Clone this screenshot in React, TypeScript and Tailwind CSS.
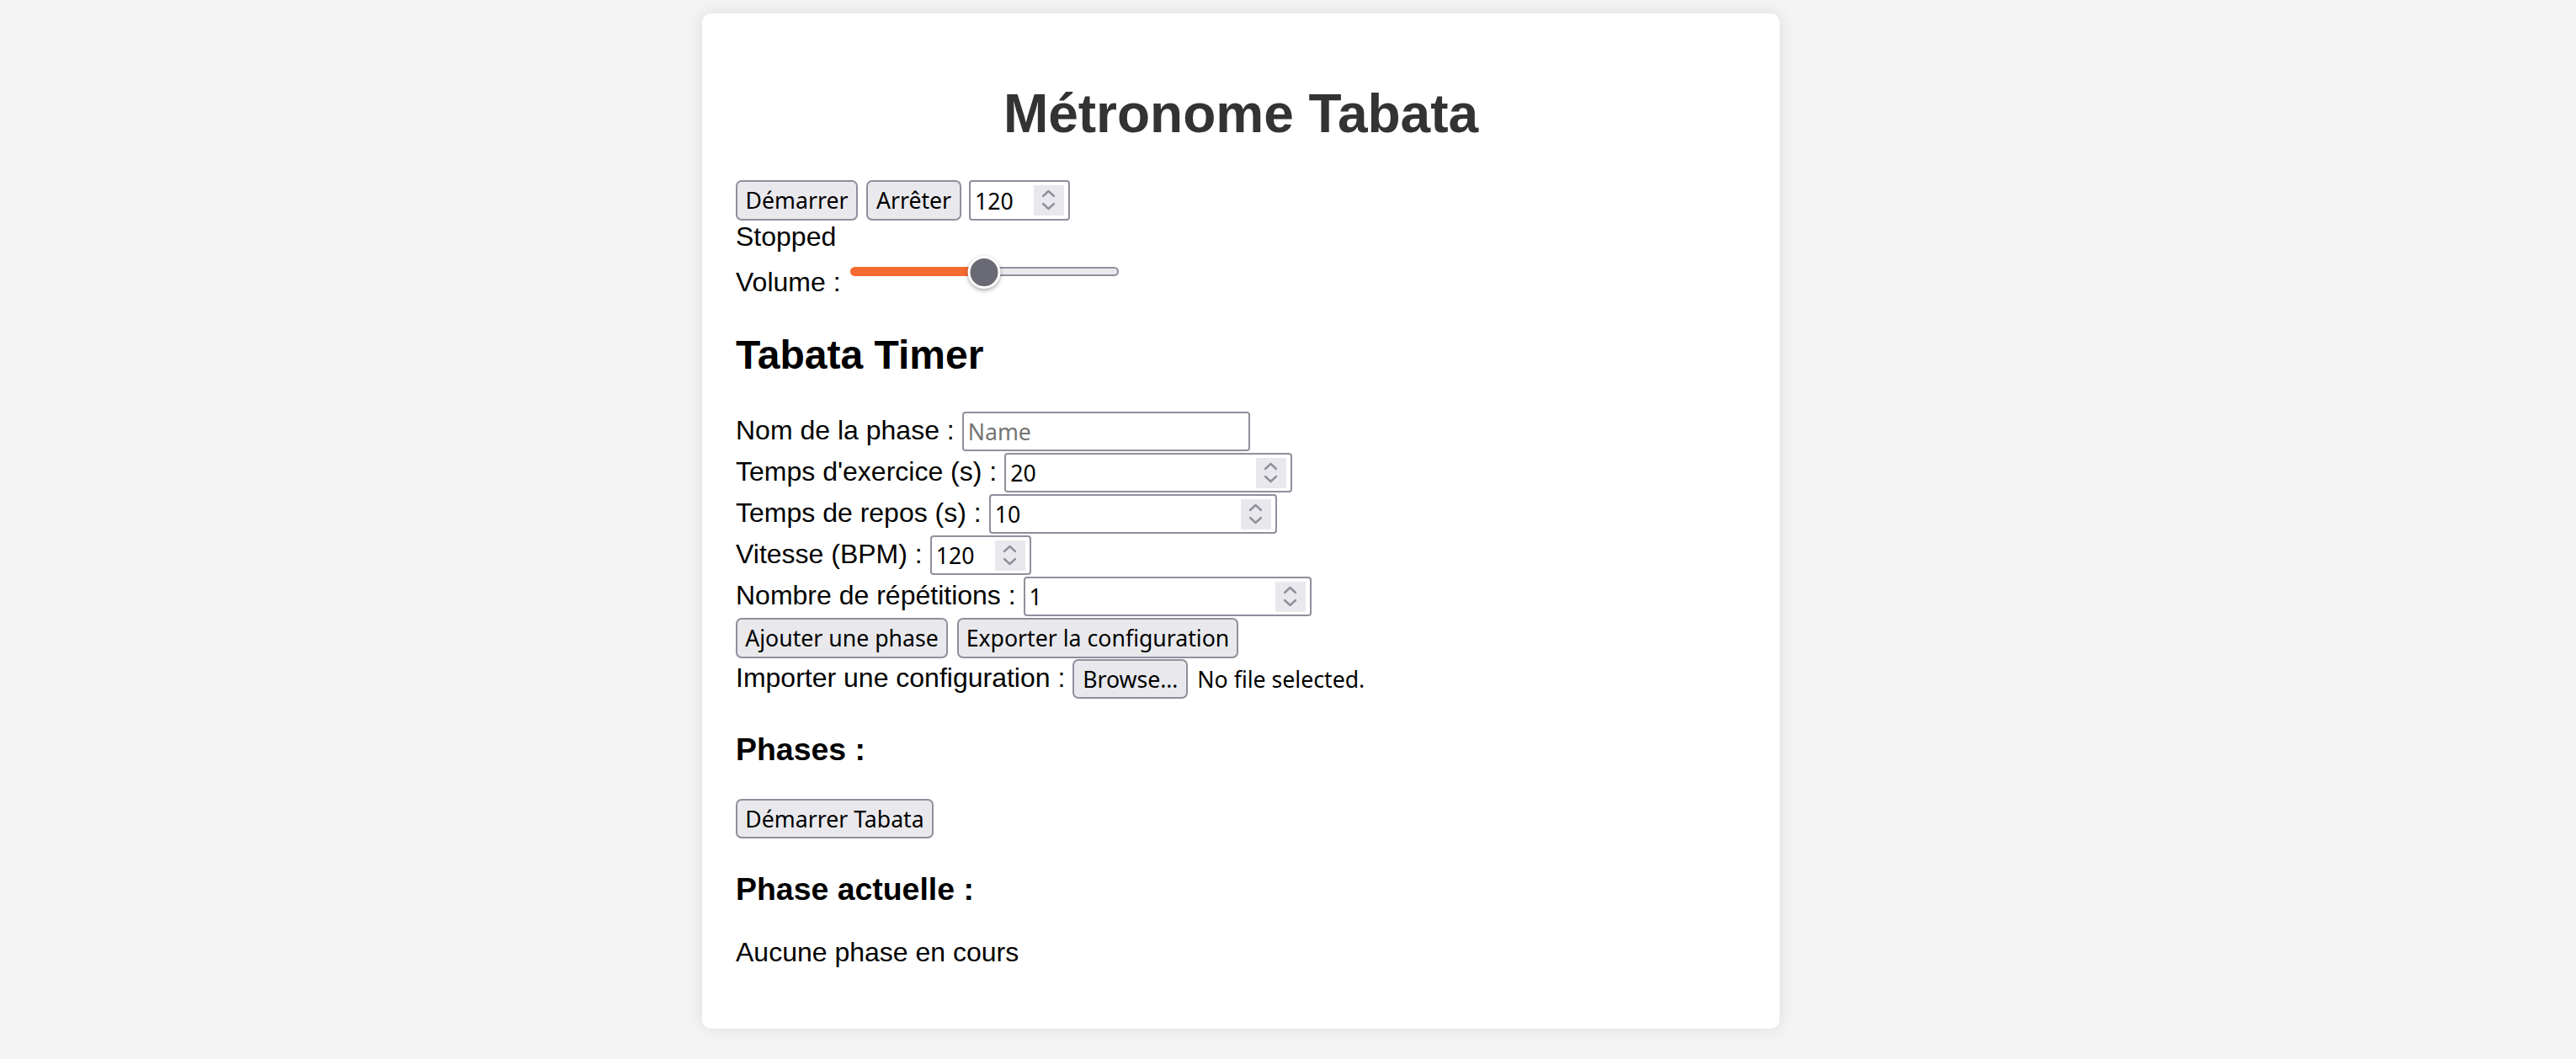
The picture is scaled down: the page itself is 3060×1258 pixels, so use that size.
import { useState, type ReactNode } from 'react'

const controlFont = "font-['Noto_Sans',sans-serif] text-[26.67px]"

function Spinner() {
  return (
    <div className="flex h-[36px] w-[36px] shrink-0 items-center justify-center bg-[#e9e9ed]">
      <svg width="36" height="36" viewBox="0 0 36 36" fill="none" stroke="#8f8f9d" strokeWidth="2.4" strokeLinecap="round" strokeLinejoin="round">
        <path d="M11 13 L17.5 7 L24 13" />
        <path d="M11 22 L17.5 28 L24 22" />
      </svg>
    </div>
  )
}

function NumberField({ value, className }: { value: string; className: string }) {
  return (
    <div className={`flex items-center rounded-[4px] border-2 border-[#8f8f9d] bg-white pl-[5px] pr-[5px] ${className}`}>
      <input
        type="text"
        defaultValue={value}
        className={`min-w-0 flex-1 bg-transparent text-black outline-none ${controlFont}`}
      />
      <Spinner />
    </div>
  )
}

function Btn({ children, className, onClick }: { children: ReactNode; className: string; onClick?: () => void }) {
  return (
    <button
      onClick={onClick}
      className={`flex shrink-0 items-center justify-center rounded-[7px] border-2 border-[#8f8f9d] bg-[#e9e9ed] leading-[36px] text-black ${controlFont} ${className}`}
    >
      {children}
    </button>
  )
}

function Row({ label, children }: { label: string; children: ReactNode }) {
  return (
    <div className="flex h-[49px] items-start">
      <span className="whitespace-nowrap pt-[4px] leading-[37px]">{label}</span>
      <div className="ml-[9px] flex items-start">{children}</div>
    </div>
  )
}

export default function App() {
  const [running, setRunning] = useState(false)
  const [volume] = useState(50)

  return (
    <div className="min-h-screen bg-[#f4f4f4]">
      <div className="flex justify-center pr-[112px] pt-[16px]">
        <div className="w-[1280px] rounded-[11px] bg-white px-[40px] pb-[40px] pt-[40px] font-['Liberation_Sans',Arial,sans-serif] text-[32px] leading-[37px] text-black shadow-[0_0_20px_rgba(0,0,0,0.1)]">
          <h1 className="mb-[43px] mt-[43px] text-center text-[64px] font-bold leading-[72px] text-[#333]">
            Métronome Tabata
          </h1>

          <div className="flex h-[49px] items-start">
            <Btn className="h-[48px] w-[145px]" onClick={() => setRunning(true)}>Démarrer</Btn>
            <Btn className="ml-[10px] h-[48px] w-[113px]" onClick={() => setRunning(false)}>Arrêter</Btn>
            <NumberField value="120" className="ml-[9px] h-[48px] w-[120px]" />
          </div>
          <div>{running ? 'Running' : 'Stopped'}</div>
          <div className="flex h-[54px] items-end">
            <span className="leading-[37px]">Volume :</span>
            <div className="relative ml-[11px] mt-[6px] h-[36px] w-[319px] self-start">
              <div className="absolute left-0 right-0 top-[11px] flex h-[11px]">
                <div className="h-full rounded-l-full bg-[#f46a30]" style={{ width: `${volume}%` }} />
                <div className="h-full flex-1 rounded-r-full border-2 border-[#8f8f9d] bg-[#e9e9ed]" />
              </div>
              <div
                className="absolute top-[-2px] h-[39px] w-[39px] -translate-x-1/2 rounded-full border-[3px] border-white bg-[#6a6a75] shadow-[0_2px_5px_rgba(0,0,0,0.35)]"
                style={{ left: `${volume}%` }}
              />
            </div>
          </div>

          <h2 className="mb-[40px] mt-[40px] text-[48px] font-bold leading-[55px]">Tabata Timer</h2>

          <Row label="Nom de la phase :">
            <input
              type="text"
              placeholder="Name"
              className={`h-[47px] w-[342px] rounded-[4px] border-2 border-[#8f8f9d] bg-white px-[5px] text-black outline-none placeholder:text-[#757575] ${controlFont}`}
            />
          </Row>
          <Row label="Temps d'exercice (s) :">
            <NumberField value="20" className="h-[47px] w-[342px]" />
          </Row>
          <Row label="Temps de repos (s) :">
            <NumberField value="10" className="h-[47px] w-[342px]" />
          </Row>
          <Row label="Vitesse (BPM) :">
            <NumberField value="120" className="h-[47px] w-[120px]" />
          </Row>
          <Row label="Nombre de répétitions :">
            <NumberField value="1" className="h-[47px] w-[342px]" />
          </Row>
          <div className="flex h-[49px] items-start">
            <Btn className="h-[48px] w-[252px]">Ajouter une phase</Btn>
            <Btn className="ml-[11px] h-[48px] w-[334px]">Exporter la configuration</Btn>
          </div>
          <Row label="Importer une configuration :">
            <Btn className="h-[47px] w-[137px]">Browse…</Btn>
            <span className={`ml-[11px] flex h-[47px] items-center whitespace-nowrap leading-[36px] ${controlFont}`}>
              No file selected.
            </span>
          </Row>

          <h3 className="mb-[37px] mt-[37px] text-[37.44px] font-bold leading-[43px]">Phases :</h3>
          <div className="flex h-[49px] items-start">
            <Btn className="h-[47px] w-[235px]">Démarrer Tabata</Btn>
          </div>

          <h3 className="mt-[37px] text-[37.44px] font-bold leading-[43px]">Phase actuelle :</h3>
          <p className="mb-[32px] mt-[35px]">Aucune phase en cours</p>
        </div>
      </div>
    </div>
  )
}
